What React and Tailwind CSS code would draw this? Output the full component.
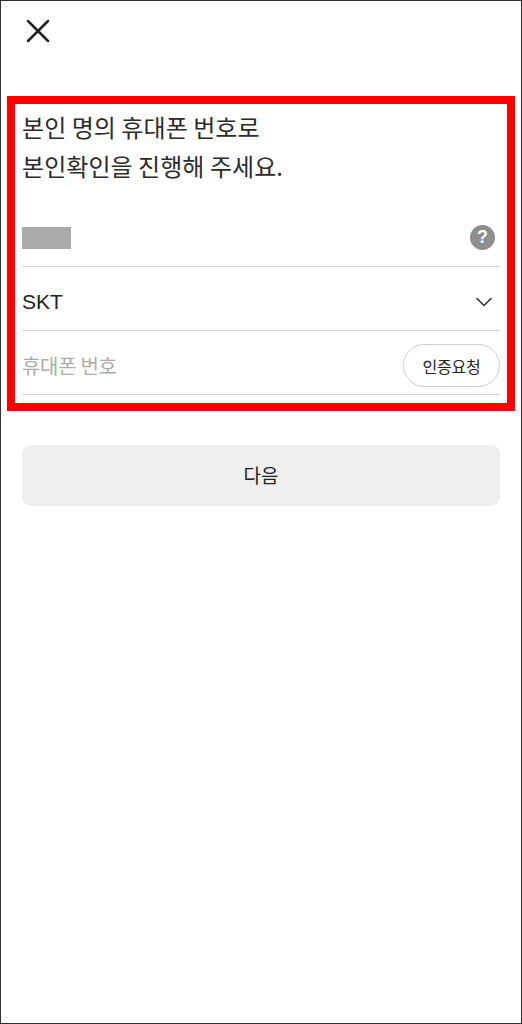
import { ChevronDown, X } from "lucide-react";

const fontStack = "font-['Noto_Sans_CJK_KR','Noto_Sans',sans-serif]";

export default function App() {
  return (
    <div className={`h-[1024px] w-[522px] overflow-hidden border border-[#333] bg-white text-[#222] ${fontStack}`}>
      <div className="flex h-[95px] items-start pl-[17px] pt-[10px]">
        <X className="h-[40px] w-[40px] text-[#222]" strokeWidth={1.5} />
      </div>

      <div className="mx-[6px] h-[315px] border-[8px] border-[#f00] px-[7px] pt-[3px]">
        <h1 className="text-[24px] font-normal leading-[39px] tracking-[0.05px] text-[#2b2b2b]">
          본인 명의 휴대폰 번호로
          <br />
          본인확인을 진행해 주세요.
        </h1>

        <div className="mt-[18px] flex h-[64px] items-center justify-between border-b border-[#d4d4d4] pb-[2px] pr-[5px] pt-[8px]">
          <div className="h-[22px] w-[49px] bg-[#aaaaaa]" />
          <div className="flex h-[25px] w-[25px] items-center justify-center rounded-full bg-[#8e8e8e] font-['Liberation_Sans',sans-serif] text-[18px] font-bold text-white">
            ?
          </div>
        </div>

        <div className="flex h-[64px] items-center justify-between border-b border-[#d4d4d4] pr-[2px] pt-[6px]">
          <span className="font-['Liberation_Sans',sans-serif] text-[21px] text-[#222]">SKT</span>
          <ChevronDown className="h-[28px] w-[28px] text-[#333]" strokeWidth={1.4} />
        </div>

        <div className="flex h-[64px] items-center justify-between border-b border-[#d4d4d4] pt-[6px]">
          <span className="text-[20px] tracking-[-0.3px] text-[#ababab]">휴대폰 번호</span>
          <button
            type="button"
            className="flex h-[43px] w-[97px] items-center justify-center rounded-full border border-[#cfcfcf] text-[16px] tracking-[-0.2px] text-[#222]"
          >
            인증요청
          </button>
        </div>
      </div>

      <div className="mx-[21px] mt-[34px]">
        <button
          type="button"
          className="flex h-[61px] w-full items-center justify-center rounded-[9px] bg-[#efefef] text-[19px] text-[#222]"
        >
          다음
        </button>
      </div>
    </div>
  );
}
